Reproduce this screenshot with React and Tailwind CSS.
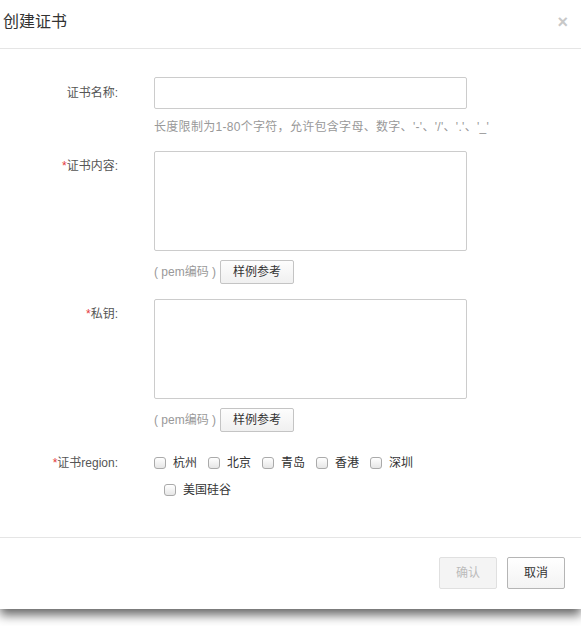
import React from 'react';

const font = { fontFamily: '"Liberation Sans", "Noto Sans CJK SC", sans-serif' };

const Label = ({ required, children, className = '' }) => (
    <div className={`w-[118px] shrink-0 text-right text-[12px] text-[#555] ${className}`}>
        {required && <span className="text-[#e4393c]">*</span>}
        {children}
    </div>
);

const PemHint = () => (
    <div className="flex items-center mt-[9px] h-[24px]">
        <span className="text-[12px] text-[#999]">( pem编码 )</span>
        <button className="ml-[4px] w-[74px] h-[24px] border border-[#c4c4c4] rounded-[2px] bg-gradient-to-b from-[#fdfdfd] to-[#f0f0f0] text-[12px] text-[#333]">
            样例参考
        </button>
    </div>
);

const Check = ({ label, className = '' }) => (
    <label className={`flex items-center h-[16px] ${className}`}>
        <span className="w-[12px] h-[12px] rounded-[3px] border border-[#aaa] bg-gradient-to-b from-white to-[#e6e6e6]" />
        <span className="ml-[7px] text-[12px] text-[#333]">{label}</span>
    </label>
);

export default function App() {
    return (
        <div className="w-[581px] h-[626px] bg-white overflow-hidden" style={font}>
            <div className="h-[609px] bg-white flex flex-col shadow-[0_6px_10px_rgba(0,0,0,0.6)] relative">
                {/* header */}
                <div className="h-[49px] shrink-0 border-b border-[#e5e5e5] flex items-center justify-between pl-[3px] pr-[13px] pb-[4px]">
                    <h3 className="text-[16px] text-[#333]">创建证书</h3>
                    <span className="text-[18px] font-bold leading-none text-[#c8c8c8]">×</span>
                </div>

                {/* body */}
                <div className="flex-1 pt-[28px]">
                    <div className="flex">
                        <Label className="pt-[7px]">证书名称:</Label>
                        <div className="ml-[36px]">
                            <div className="w-[313px] h-[32px] border border-[#ccc] rounded-[2px]" />
                            <p className="mt-[10px] text-[12px] text-[#999] leading-[16px] tracking-[0.3px]">
                                长度限制为1-80个字符，允许包含字母、数字、'-'、'/'、'.'、'_'
                            </p>
                        </div>
                    </div>

                    <div className="flex mt-[16px]">
                        <Label required className="pt-[6px]">证书内容:</Label>
                        <div className="ml-[36px]">
                            <div className="w-[313px] h-[100px] border border-[#ccc] rounded-[2px]" />
                            <PemHint />
                        </div>
                    </div>

                    <div className="flex mt-[15px]">
                        <Label required className="pt-[6px]">私钥:</Label>
                        <div className="ml-[36px]">
                            <div className="w-[313px] h-[100px] border border-[#ccc] rounded-[2px]" />
                            <PemHint />
                        </div>
                    </div>

                    <div className="flex mt-[23px]">
                        <Label required className="leading-[16px]">证书region:</Label>
                        <div className="ml-[36px]">
                            <div className="flex gap-[11px]">
                                <Check label="杭州" />
                                <Check label="北京" />
                                <Check label="青岛" />
                                <Check label="香港" />
                                <Check label="深圳" />
                            </div>
                            <div className="mt-[11px] ml-[10px] flex">
                                <Check label="美国硅谷" />
                            </div>
                        </div>
                    </div>
                </div>

                {/* footer */}
                <div className="h-[72px] shrink-0 border-t border-[#e5e5e5] flex items-start justify-end gap-[10px] pt-[19px] pr-[16px]">
                    <button className="w-[58px] h-[32px] border border-[#e0e0e0] rounded-[2px] bg-[#f4f4f4] text-[12px] text-[#bbb]">
                        确认
                    </button>
                    <button className="w-[58px] h-[32px] border border-[#b5b5b5] rounded-[2px] bg-gradient-to-b from-white to-[#f3f3f3] text-[12px] text-[#333]">
                        取消
                    </button>
                </div>
            </div>
        </div>
    );
}
